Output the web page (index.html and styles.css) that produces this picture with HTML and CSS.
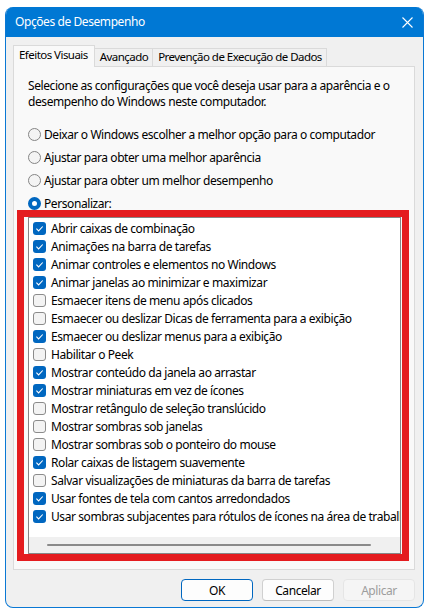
FILE: index.html
```html
<!DOCTYPE html>
<html lang="pt-BR">
<head>
<meta charset="utf-8">
<title>Opções de Desempenho</title>
<link rel="stylesheet" href="styles.css">
</head>
<body>
<div class="window">
  <div class="titlebar">
    <span class="title">Opções de Desempenho</span>
    <svg class="close" width="11" height="11" viewBox="0 0 11 11"><path d="M0.5 0.5 L10.5 10.5 M10.5 0.5 L0.5 10.5" stroke="#fff" stroke-width="1.1" fill="none"/></svg>
  </div>
  <div class="content">
    <div class="tabs">
      <div class="tab active">Efeitos Visuais</div>
      <div class="tab">Avançado</div>
      <div class="tab">Prevenção de Execução de Dados</div>
    </div>
    <div class="panel">
      <p class="intro">Selecione as configurações que você deseja usar para a aparência e o desempenho do Windows neste computador.</p>
      <div class="radios">
        <div class="radio"><span class="dot"></span>Deixar o Windows escolher a melhor opção para o computador</div>
        <div class="radio"><span class="dot"></span>Ajustar para obter uma melhor aparência</div>
        <div class="radio"><span class="dot"></span>Ajustar para obter um melhor desempenho</div>
        <div class="radio"><span class="dot on"></span>Personalizar:</div>
      </div>
      <div class="highlight">
        <div class="listbox">
          <ul class="items">
            <li><span class="box on"><svg viewBox="0 0 13 13"><polyline points="3.4,6.7 5.6,8.9 9.7,4.5"/></svg></span>Abrir caixas de combinação</li>
            <li><span class="box on"><svg viewBox="0 0 13 13"><polyline points="3.4,6.7 5.6,8.9 9.7,4.5"/></svg></span>Animações na barra de tarefas</li>
            <li><span class="box on"><svg viewBox="0 0 13 13"><polyline points="3.4,6.7 5.6,8.9 9.7,4.5"/></svg></span>Animar controles e elementos no Windows</li>
            <li><span class="box on"><svg viewBox="0 0 13 13"><polyline points="3.4,6.7 5.6,8.9 9.7,4.5"/></svg></span>Animar janelas ao minimizar e maximizar</li>
            <li><span class="box"></span>Esmaecer itens de menu após clicados</li>
            <li><span class="box"></span>Esmaecer ou deslizar Dicas de ferramenta para a exibição</li>
            <li><span class="box on"><svg viewBox="0 0 13 13"><polyline points="3.4,6.7 5.6,8.9 9.7,4.5"/></svg></span>Esmaecer ou deslizar menus para a exibição</li>
            <li><span class="box"></span>Habilitar o Peek</li>
            <li><span class="box on"><svg viewBox="0 0 13 13"><polyline points="3.4,6.7 5.6,8.9 9.7,4.5"/></svg></span>Mostrar conteúdo da janela ao arrastar</li>
            <li><span class="box on"><svg viewBox="0 0 13 13"><polyline points="3.4,6.7 5.6,8.9 9.7,4.5"/></svg></span>Mostrar miniaturas em vez de ícones</li>
            <li><span class="box"></span>Mostrar retângulo de seleção translúcido</li>
            <li><span class="box"></span>Mostrar sombras sob janelas</li>
            <li><span class="box"></span>Mostrar sombras sob o ponteiro do mouse</li>
            <li><span class="box on"><svg viewBox="0 0 13 13"><polyline points="3.4,6.7 5.6,8.9 9.7,4.5"/></svg></span>Rolar caixas de listagem suavemente</li>
            <li><span class="box"></span>Salvar visualizações de miniaturas da barra de tarefas</li>
            <li><span class="box on"><svg viewBox="0 0 13 13"><polyline points="3.4,6.7 5.6,8.9 9.7,4.5"/></svg></span>Usar fontes de tela com cantos arredondados</li>
            <li><span class="box on"><svg viewBox="0 0 13 13"><polyline points="3.4,6.7 5.6,8.9 9.7,4.5"/></svg></span>Usar sombras subjacentes para rótulos de ícones na área de trabalho</li>
          </ul>
          <div class="hscroll"><div class="thumb"></div></div>
        </div>
      </div>
    </div>
    <div class="buttons">
      <button class="btn default">OK</button>
      <button class="btn">Cancelar</button>
      <button class="btn disabled">Aplicar</button>
    </div>
  </div>
</div>
</body>
</html>
```
FILE: styles.css
```css
* { box-sizing: border-box; }

html, body {
  margin: 0;
  background: #ffffff;
}

body {
  font-family: "Noto Sans", "Open Sans", sans-serif;
  font-size: 12px;
  letter-spacing: -0.42px;
  color: #000;
}

/* dialog frame */
.window {
  margin: 7px 0 0 5px;
  width: 419px;
  height: 601px;
  border: 1px solid #0a78d4;
  border-top: none;
  border-radius: 8px;
  background: #f0f0f0;
  overflow: hidden;
  display: flex;
  flex-direction: column;
}

.titlebar {
  height: 30px;
  flex: none;
  background: #0078d4;
  color: #fff;
  display: flex;
  align-items: center;
  justify-content: space-between;
  padding: 0 10px 0 9px;
}

.title { line-height: 16px; }

.close { display: block; }

.content {
  flex: 1;
  display: flex;
  flex-direction: column;
  padding: 8px 8px 6px 7px;
}

/* tab strip */
.tabs {
  display: flex;
  align-items: flex-end;
  height: 21px;
  flex: none;
  position: relative;
  z-index: 1;
}

.tab {
  height: 18px;
  line-height: 16px;
  font-size: 11.5px;
  letter-spacing: -0.54px;
  padding: 0 4px 0 5px;
  border: 1px solid #dadada;
  border-bottom: none;
  border-left: none;
  background: #f0f0f0;
  white-space: nowrap;
}

.tab.active {
  height: 22px;
  margin-bottom: -1px;
  padding: 1px 6px 0 5px;
  border-left: 1px solid #dadada;
  background: #f9f9f9;
}

.panel {
  flex: 1;
  background: #f9f9f9;
  border: 1px solid #dadada;
  padding: 11px 13px 0 14px;
}

.intro {
  margin: 0;
  line-height: 16px;
}

/* radio buttons */
.radios {
  margin-top: 17px;
  display: flex;
  flex-direction: column;
  gap: 9px;
}

.radio {
  display: flex;
  align-items: center;
  height: 14px;
  white-space: nowrap;
}

.dot {
  width: 13px;
  height: 13px;
  flex: none;
  border-radius: 50%;
  border: 1px solid #858585;
  background: #f4f4f4;
  margin-right: 3px;
}

.dot.on {
  border: 4px solid #0067c0;
  background: #ffffff;
}

/* annotation frame around the list */
.highlight {
  margin: 0 0 0 -11px;
  width: 392px;
  border: 7px solid #e41c1f;
  padding: 0 1px 0 4px;
}

.listbox {
  height: 337px;
  border: 1px solid #868686;
  background: #fff;
  display: flex;
  flex-direction: column;
  overflow: hidden;
}

.items {
  list-style: none;
  margin: 0;
  padding: 1px 0 0 0;
  flex: 1;
  overflow: hidden;
}

.items li {
  height: 18px;
  display: flex;
  align-items: center;
  white-space: nowrap;
  padding-left: 4px;
}

.box {
  width: 13px;
  height: 13px;
  flex: none;
  border-radius: 3px;
  border: 1px solid #8b8b8b;
  background: #f3f3f3;
  margin-right: 5px;
}

.box.on {
  border: none;
  background: #0067c0;
}

.box svg {
  display: block;
  width: 13px;
  height: 13px;
  fill: none;
  stroke: #ffffff;
  stroke-width: 1.1;
}

/* thin horizontal scrollbar */
.hscroll {
  height: 16px;
  flex: none;
  background: #f0f0f0;
  display: flex;
  align-items: center;
  padding-left: 18px;
}

.thumb {
  width: 324px;
  height: 2px;
  border-radius: 1px;
  background: #8a8a8a;
}

/* dialog buttons */
.buttons {
  margin-top: 9px;
  display: flex;
  justify-content: flex-end;
  gap: 9px;
  flex: none;
}

.btn {
  width: 72px;
  height: 22px;
  font: inherit;
  letter-spacing: inherit;
  color: #000;
  background: #fdfdfd;
  border: 1px solid #d0d0d0;
  border-bottom-color: #bcbcbc;
  border-radius: 4px;
  padding: 0;
}

.btn.default {
  border: 1px solid #0067c0;
}

.btn.disabled {
  background: #f5f5f5;
  border-color: #e5e5e5;
  color: #9d9d9d;
}
```
